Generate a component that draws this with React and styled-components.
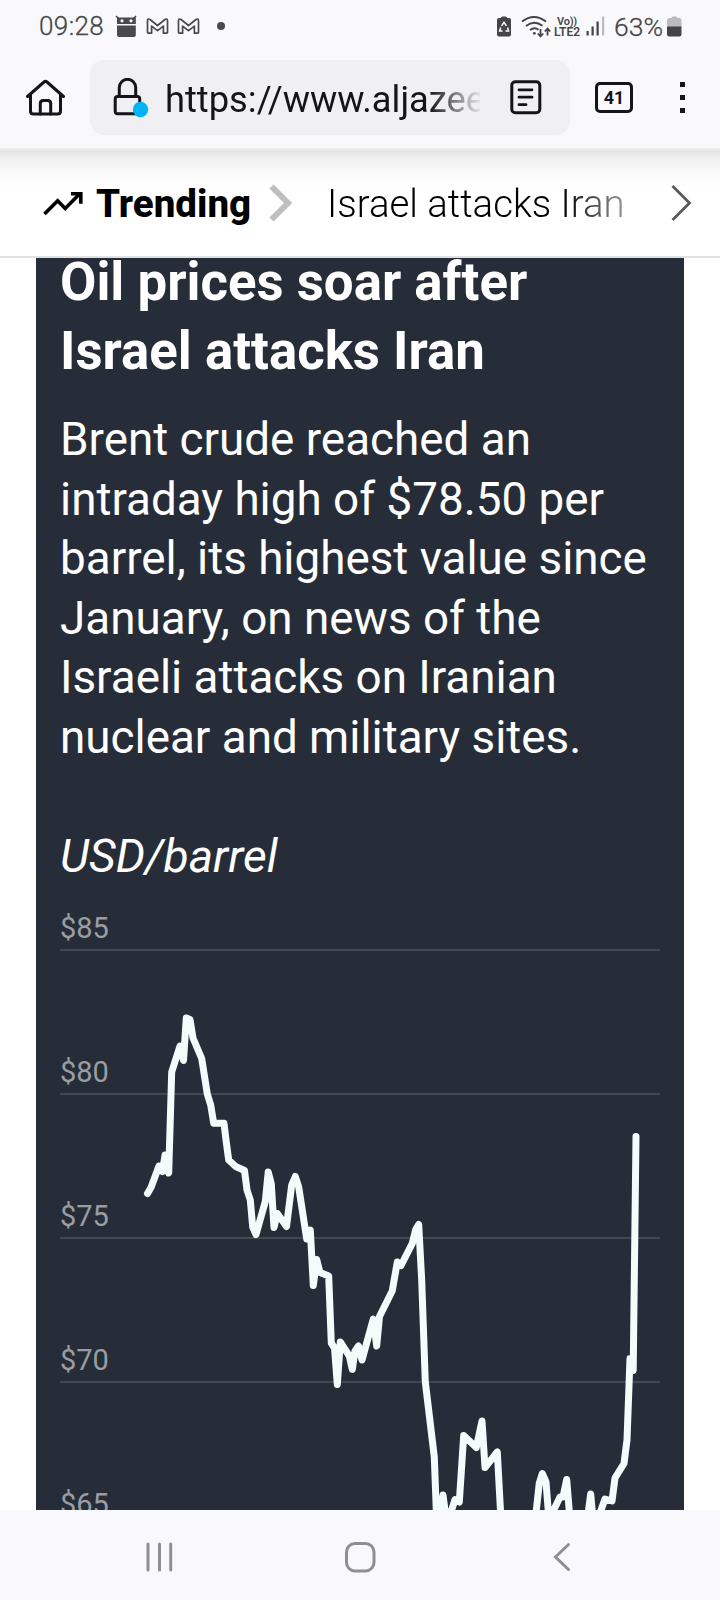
import React from "react";
import styled, { createGlobalStyle } from "styled-components";

const gridLines = [
  { label: "$85", y: 950 },
  { label: "$80", y: 1094 },
  { label: "$75", y: 1238 },
  { label: "$70", y: 1382 },
  { label: "$65", y: 1526 },
];

const brent = [
  [147.5, 1193.5], [151, 1187.5], [159, 1166], [162.5, 1171.5], [165, 1155], [168.7, 1173],
  [171.7, 1072], [180, 1046], [183.5, 1060.5], [186.3, 1018], [190, 1019.5],
  [193, 1038], [201.7, 1058.5], [207.3, 1094], [210.7, 1105], [213.7, 1123.3],
  [224, 1123.3], [226, 1140], [228.7, 1160], [235.7, 1166.5], [244.5, 1170.5],
  [247, 1190], [250.3, 1200], [252.7, 1227], [256, 1234.5], [265.3, 1201.5],
  [268.2, 1172], [271.3, 1184], [274, 1227.5], [277.3, 1213.5], [286.5, 1226.5],
  [291.7, 1185], [295.3, 1176.5], [298.7, 1187], [306.7, 1239], [310.3, 1230],
  [313.3, 1285.5], [316.7, 1259.5], [320, 1272.5], [328.7, 1276], [331.3, 1343],
  [334.5, 1348], [337.3, 1384.5], [340.3, 1342], [349.3, 1356], [352.3, 1369.5],
  [355, 1351], [358.5, 1346], [362, 1360], [373.3, 1319], [376.7, 1346],
  [379.5, 1316.5], [392.3, 1290.7], [397.3, 1262], [401, 1265.5], [412.3, 1243.3],
  [415.7, 1229.5], [418.7, 1224.5], [421.7, 1280], [425.3, 1382], [434.3, 1457],
  [437, 1530], [443, 1495], [447, 1525], [455, 1499.5], [459.3, 1502],
  [463.7, 1435.5], [476.3, 1447.5], [482, 1421], [485, 1467.5], [497.3, 1452],
  [501, 1520], [508, 1580], [528, 1580], [536, 1513], [539.3, 1483],
  [542.3, 1473.5], [546, 1482], [549, 1520], [560, 1497], [563, 1497],
  [566.7, 1479.5], [570, 1520], [576, 1560], [582, 1560], [590.7, 1494],
  [594, 1530], [600, 1513], [605, 1499], [612, 1501], [615, 1478],
  [624, 1463.5], [627, 1440], [630, 1358.5], [633.2, 1370.5], [636, 1136.5],
];

const StatusIcons = () => (
  <svg width="86" height="24" viewBox="115 14 86 24">
    <path d="M116 16l3 3M136 16l-3 3" stroke="#4a4a4c" strokeWidth="1.6" />
    <path d="M117 17.5h18.8V24H117z" fill="#4a4a4c" />
    <path d="M117 25.5h18.8V35q0 2-2 2h-14.8q-2 0-2-2z" fill="#4a4a4c" />
    <circle cx="122" cy="20.8" r="1.6" fill="#f9f9fb" />
    <circle cx="131" cy="20.8" r="1.6" fill="#f9f9fb" />
    <MailMark x={147} />
    <MailMark x={178} />
  </svg>
);

// outlined envelope "M" used for the mail notifications
const MailMark = ({ x }) => (
  <path
    transform={`translate(${x} 17.5)`}
    d="M1.200 15.700q-.7 0-.7-.6V3.100Q.8.6 3 2l7.500 6L18 2q2.200-1.400 2.500 1.100v12q0 .6-.7.6h-3.400V8.600l-5.900 4.600-5.900-4.600v7.100z"
    fill="none"
    stroke="#4a4a4c"
    strokeWidth="1.700"
    strokeLinejoin="round"
  />
);

const SaverIcon = () => (
  <svg width="14" height="21" viewBox="0 0 14 21">
    <path d="M4 2q0-1.6 1.5-1.6h3Q10 .4 10 2h2q2 0 2 2v14.500q0 2-2 2H2q-2 0-2-2V4q0-2 2-2z" fill="#444446" />
    <path d="M4.600 9.800L7 6.300l2.400 3.500M10.600 11.500l1 3.500H8.400M5.600 15H2.600l1.100-3.500" fill="none" stroke="#f9f9fb" strokeWidth="1.500" />
  </svg>
);

const WifiIcon = () => (
  <svg width="30" height="23" viewBox="521 14 30 23" fill="none" stroke="#444446" strokeWidth="2">
    <path d="M522 20.500q12-9 24 0M526 25q8-6.500 16.500-.3M530 29q4.500-3.500 8.500-.3" />
    <circle cx="534.300" cy="32.300" r="1.400" fill="#444446" stroke="none" />
    <path d="M540.500 28v7M537.800 32.500l2.700 3 2.700-3M547.500 34.500v-6.500M544.800 30.500l2.700-3 2.700 3" strokeWidth="1.800" />
  </svg>
);

const SignalIcon = () => (
  <svg width="19" height="20" viewBox="0 0 19 20">
    <path d="M.5 15h2.200v4.500H.5zM5.500 10.500h2.200v9H5.500zM10.500 5.500h2.200v14h-2.200z" fill="#444446" />
    <path d="M16 .5h2.200v19H16z" fill="#bcbcbe" />
  </svg>
);

const BatteryIcon = () => (
  <svg width="15" height="21" viewBox="0 0 15 21">
    <path d="M4.500 2q0-1.600 1.500-1.600h3q1.500 0 1.500 1.600h1.800q2.200 0 2.200 2.200V11H0V4.200Q0 2 2.200 2z" fill="#bcbcbe" />
    <path d="M0 10.500h14.500v7.800q0 2.200-2.200 2.200H2.200Q0 20.500 0 18.300z" fill="#444446" />
  </svg>
);

const HomeIcon = () => (
  <svg width="40" height="38" viewBox="26 79 40 38" fill="none" stroke="#15141a" strokeWidth="3" strokeLinejoin="round" strokeLinecap="round">
    <path d="M27.500 96.500L44 82q1.500-1.300 3 0l16.500 14.500" />
    <path d="M30.500 95v16q0 3 3 3h24q3 0 3-3V95" />
    <path d="M40.300 114v-10.500q0-3 3-3h4.400q3 0 3 3V114" />
  </svg>
);

const LockIcon = () => (
  <svg width="36" height="40" viewBox="113 79 36 40" fill="none" stroke="#15141a" strokeWidth="3">
    <path d="M119.300 97v-8.500a8.200 8.200 0 0 1 16.400 0V97" />
    <rect x="115.200" y="97.500" width="24.500" height="17.200" rx="2.500" />
    <circle cx="140.500" cy="110.500" r="7.700" fill="#00b3f4" stroke="none" />
  </svg>
);

const ReaderIcon = () => (
  <svg width="32" height="35" viewBox="0 0 32 35" fill="none" stroke="#15141a" strokeLinecap="round">
    <rect x="1.800" y="1.800" width="28" height="31" rx="3.500" strokeWidth="3" />
    <path d="M9 9.800h13M9 17.200h13M9 24.700h7" strokeWidth="2.800" />
  </svg>
);

const TrendIcon = () => (
  <svg width="41" height="25" viewBox="43 192 41 25" fill="none" stroke="#000" strokeWidth="3.600">
    <path d="M44.500 215l13.200-13.300 7.500 7.700 14.500-14.600" />
    <path d="M71 194.800h9.800v10" />
  </svg>
);

const App = () => {
  return (
    <Screen>
      <GlobalStyle />
      <StatusBar>
        <Clock>09:28</Clock>
        <StatusIcons />
        <Dot />
        <StatusRight>
          <SaverIcon />
          <WifiIcon />
          <Volte>
            <span>Vo))</span>
            <span>LTE2</span>
          </Volte>
          <SignalIcon />
          <Percent>63%</Percent>
          <BatteryIcon />
        </StatusRight>
      </StatusBar>

      <Toolbar>
        <HomeIcon />
        <AddressBar>
          <LockIcon />
          <Url>https://www.aljazee</Url>
          <ReaderIcon />
        </AddressBar>
        <TabCount>41</TabCount>
        <MenuDots>
          <i />
          <i />
          <i />
        </MenuDots>
      </Toolbar>

      <TrendingBar>
        <TrendIcon />
        <TrendingTitle>Trending</TrendingTitle>
        <svg width="24" height="38" viewBox="0 0 24 38">
          <path d="M2.500 2.500l16.500 16.500-16.500 16.500" fill="none" stroke="#bfbfbf" strokeWidth="6" />
        </svg>
        <TrendingLink>Israel attacks Iran</TrendingLink>
        <svg width="21" height="38" viewBox="0 0 21 38">
          <path d="M1.500 2l17 17-17 17" fill="none" stroke="#595959" strokeWidth="2.800" />
        </svg>
      </TrendingBar>

      <Card>
        <Title>
          Oil prices soar after
          <br />
          Israel attacks Iran
        </Title>
        <Summary>
          Brent crude reached an
          <br />
          intraday high of $78.50 per
          <br />
          barrel, its highest value since
          <br />
          January, on news of the
          <br />
          Israeli attacks on Iranian
          <br />
          nuclear and military sites.
        </Summary>
        <Unit>USD/barrel</Unit>
        <Chart viewBox="60 900 600 610">
          {gridLines.map((line) => (
            <g key={line.label}>
              <text x="60" y={line.y - 12}>
                {line.label}
              </text>
              <rect x="60" y={line.y - 1} width="600" height="2" />
            </g>
          ))}
          <polyline points={brent.join(" ")} />
        </Chart>
      </Card>

      <NavBar>
        <svg width="28" height="30" viewBox="0 0 28 30">
          <path d="M2 2v26M13.500 2v26M24.700 2v26" stroke="#8f8f8f" strokeWidth="3" strokeLinecap="round" />
        </svg>
        <svg width="32" height="32" viewBox="0 0 32 32">
          <rect x="2.500" y="2.500" width="27.500" height="27.500" rx="8.500" fill="none" stroke="#8f8f8f" strokeWidth="3" />
        </svg>
        <svg width="18" height="30" viewBox="0 0 18 30">
          <path d="M15.500 2.500L2.500 15l13 12.500" fill="none" stroke="#8f8f8f" strokeWidth="3" strokeLinecap="round" />
        </svg>
      </NavBar>
    </Screen>
  );
};

const GlobalStyle = createGlobalStyle`
  * {
    box-sizing: border-box;
  }

  body {
    margin: 0;
    background: #fff;
    font-family: Roboto, "Open Sans", sans-serif;
  }

  svg {
    display: block;
    flex-shrink: 0;
  }
`;

const Screen = styled.div`
  display: flex;
  flex-direction: column;
  width: 720px;
  height: 1600px;
  overflow: hidden;
`;

const StatusBar = styled.header`
  display: flex;
  align-items: center;
  height: 52px;
  padding: 0 38px 0 39px;
  background: #f9f9fb;
  color: #464648;
`;

const Clock = styled.span`
  width: 76px;
  font-size: 26px;
  font-weight: 300;
  letter-spacing: 0.4px;
  -webkit-text-stroke: 0.3px #464648;
`;

const Dot = styled.span`
  width: 8px;
  height: 8px;
  margin-left: 16px;
  border-radius: 50%;
  background: #4a4a4c;
`;

const StatusRight = styled.div`
  display: flex;
  align-items: center;
  margin-left: auto;

  svg:first-child {
    margin-right: 10px;
  }
`;

const Volte = styled.div`
  display: flex;
  flex-direction: column;
  align-items: center;
  width: 30px;
  margin: 0 4px 0 1px;
  padding-top: 1px;
  font-size: 12px;
  font-weight: 600;
  line-height: 11px;

  span:first-child {
    font-size: 11px;
    letter-spacing: -0.2px;
  }
`;

const Percent = styled.span`
  width: 53px;
  margin-left: 9px;
  font-size: 26.5px;
  font-weight: 300;
  -webkit-text-stroke: 0.3px #464648;
`;

const Toolbar = styled.nav`
  display: flex;
  align-items: center;
  height: 98px;
  padding: 0 0 5px 26px;
  border-bottom: 2px solid #ebebed;
  background: #f9f9fb;
`;

const AddressBar = styled.div`
  display: flex;
  align-items: center;
  width: 480px;
  height: 75px;
  margin-left: 24px;
  padding: 0 28px 0 23px;
  border-radius: 14px;
  background: #f0eff4;
`;

const Url = styled.div`
  width: 315px;
  margin: 0 auto 0 16px;
  padding-top: 3px;
  overflow: hidden;
  color: #15141a;
  font-size: 36.3px;
  white-space: nowrap;
  mask-image: linear-gradient(to right, #000 264px, transparent 318px);
`;

const TabCount = styled.div`
  display: flex;
  align-items: center;
  justify-content: center;
  width: 38px;
  height: 31px;
  margin-left: 25px;
  border: 3px solid #15141a;
  border-radius: 5px;
  color: #15141a;
  font-size: 18px;
  font-weight: 700;
`;

const MenuDots = styled.div`
  display: flex;
  flex-direction: column;
  gap: 8px;
  margin-left: 47px;

  i {
    width: 5px;
    height: 5px;
    background: #15141a;
  }
`;

const TrendingBar = styled.div`
  display: flex;
  align-items: center;
  height: 108px;
  padding: 0 28px 0 43px;
  border-bottom: 2px solid #e0e1e1;
  background: linear-gradient(#e3e3e3, #f0f0f0 9px, #fafafa 22px, #fff 38px);
`;

const TrendingTitle = styled.strong`
  width: 185px;
  padding-left: 12px;
  font-size: 38.5px;
  font-weight: 800;
`;

const TrendingLink = styled.span`
  width: 310px;
  margin: 0 auto 0 34px;
  font-size: 38.4px;
  font-weight: 300;
  white-space: nowrap;
  mask-image: linear-gradient(to right, #000 235px, transparent 340px);
`;

const Card = styled.article`
  width: 648px;
  height: 1252px;
  margin: 0 36px;
  padding: 0 24px;
  overflow: hidden;
  background: #262d38;
  color: #fff;
`;

const Title = styled.h1`
  margin: -10px 0 0;
  font-size: 52.8px;
  font-weight: 700;
  line-height: 69px;
  white-space: nowrap;
`;

const Summary = styled.p`
  margin: 24px 0 0;
  font-size: 45.8px;
  line-height: 59.6px;
  white-space: nowrap;
`;

const Unit = styled.p`
  margin: 59px 0 0;
  font-size: 46.2px;
  font-style: italic;
  line-height: 59.6px;
`;

const Chart = styled.svg`
  width: 600px;
  height: 610px;
  margin-top: 14px;

  text {
    fill: #9a9da2;
    font-size: 29px;
  }

  rect {
    fill: #434851;
  }

  polyline {
    fill: none;
    stroke: #f4fbfb;
    stroke-width: 7px;
    stroke-linecap: round;
    stroke-linejoin: round;
  }
`;

const NavBar = styled.footer`
  display: flex;
  align-items: center;
  height: 90px;
  padding: 4px 0 0 146px;
  background: #f9f9fb;

  svg:nth-child(2) {
    margin: 0 177px 0 170px;
  }
`;

export default App;
